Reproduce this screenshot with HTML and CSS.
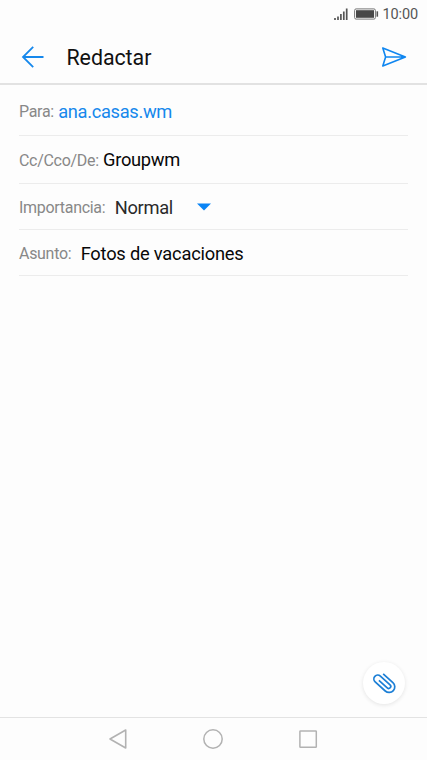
FILE: index.html
```
<!DOCTYPE html>
<html lang="es">
<head>
<meta charset="utf-8">
<title>Redactar</title>
<link rel="stylesheet" href="styles.css">
</head>
<body>
<div class="screen">
  <div class="status">
    <svg width="46" height="14" viewBox="0 0 46 14">
      <path d="M2 11v2M5 9.5V13M7.9 7v6M10.8 4.5V13M13.7 1.5V13" stroke="#555" stroke-width="1.7"/>
      <rect x="21.6" y="1.9" width="20.8" height="10.2" rx="1.5" fill="#fdfdfd" stroke="#777"/>
      <rect x="23" y="3.2" width="18" height="7.6" fill="#484848"/>
      <path d="M44.3 4.3v5.4" stroke="#555" stroke-width="1.6"/>
    </svg>
    <span class="time">10:00</span>
  </div>
  <header class="bar">
    <svg class="back" width="24" height="24" viewBox="0 0 24 24"><path d="M22.5 12H2M12.2 1.8 2 12l10.2 10.2" fill="none" stroke="#1688ec" stroke-width="1.8"/></svg>
    <h1 class="title">Redactar</h1>
    <svg class="send" width="26" height="22" viewBox="0 0 26 22"><path d="M1.8 2 24.4 11 1.8 20l2.8-9zM4.6 11H24" fill="none" stroke="#0f86f0" stroke-width="1.6" stroke-linejoin="round"/></svg>
  </header>
  <main class="form">
    <div class="row para"><span class="label">Para:</span><span class="value link">ana.casas.wm</span></div>
    <div class="row cc"><span class="label">Cc/Cco/De:</span><span class="value">Groupwm</span></div>
    <div class="row imp"><span class="label">Importancia:</span><span class="value soft">Normal</span><svg class="caret" width="14" height="8" viewBox="0 0 14 8"><path d="M0 .5h14L7 7.5z" fill="#0a84f5"/></svg></div>
    <div class="row asunto"><span class="label">Asunto:</span><span class="value">Fotos de vacaciones</span></div>
  </main>
  <div class="attach">
    <svg width="30" height="30" viewBox="-15 -15 30 30"><path transform="rotate(42)" d="M-6.8 -6.3H6.3A5.7 5.7 0 0 1 6.3 5.1H-7.3A3.9 3.9 0 0 1 -7.3 -2.7H5.7A2.1 2.1 0 0 1 5.7 1.5H-5.5" fill="none" stroke="#1c7fd6" stroke-width="1.7"/></svg>
  </div>
  <nav class="nav">
    <svg width="20" height="22" viewBox="0 0 20 22"><path d="M17.7 2v18L2 11z" fill="none" stroke="#b2b2b2" stroke-width="1.6" stroke-linejoin="round"/></svg>
    <svg width="22" height="22" viewBox="0 0 22 22"><circle cx="11" cy="11" r="9.2" fill="none" stroke="#b2b2b2" stroke-width="1.5"/></svg>
    <svg width="20" height="20" viewBox="0 0 20 20"><rect x="1.9" y="1.9" width="16.4" height="16.4" rx=".6" fill="none" stroke="#b2b2b2" stroke-width="1.5"/></svg>
  </nav>
</div>
</body>
</html>
```
FILE: styles.css
```
* { box-sizing: border-box; }
body { margin: 0; font-family: Roboto, sans-serif; background: #fdfdfd; }
svg { display: block; flex: none; }
.screen { position: relative; width: 427px; height: 760px; display: flex; flex-direction: column; overflow: hidden; }
.status { height: 30px; display: flex; justify-content: flex-end; align-items: center; padding-right: 9px; gap: 3px; }
.status svg { margin-top: -2px; }
.time { font-size: 14.5px; color: #555; line-height: 30px; letter-spacing: -.1px; }
.bar { height: 55px; display: flex; align-items: center; padding: 0 20px 0 21px; border-bottom: 2px solid #e2e2e2; }
.title { margin: 2px 0 0 21.5px; font-size: 21.4px; letter-spacing: -.06px; font-weight: 400; line-height: 28px; color: #111; flex: 1; }
.form { flex: 1; padding: 0 19px; }
.row { display: flex; align-items: center; border-bottom: 1px solid #ececec; white-space: nowrap; }
.para { height: 51px; padding-top: 2px; }
.cc { height: 48px; }
.imp { height: 46px; }
.asunto { height: 46px; }
.label { font-size: 16px; letter-spacing: -.3px; color: #888; line-height: 20px; padding-top: 1px; }
.cc .label, .imp .label, .asunto .label { padding-top: 3px; }
.value { font-size: 18.3px; letter-spacing: -.32px; color: #080808; margin-left: 4.3px; line-height: 22px; }
.para .value { padding-top: 1px; }
.link { color: #1688ec; }
.soft { color: #2a2a2a; letter-spacing: -.25px; }
.imp .value, .asunto .value { margin-left: 9.3px; padding-top: 2px; }
.asunto .value { letter-spacing: -.21px; }
.imp .value { letter-spacing: -.28px; }
.caret { margin: 1px 0 0 24px; }
.attach { position: absolute; left: 363px; top: 662px; width: 42px; height: 42px; border-radius: 50%; background: #fff; box-shadow: 0 1px 4px rgba(0,0,0,.1); display: flex; align-items: center; justify-content: center; }
.nav { height: 43px; border-top: 1px solid #e3e3e3; display: flex; align-items: center; justify-content: center; gap: 74px; padding-right: 1px; }
```
